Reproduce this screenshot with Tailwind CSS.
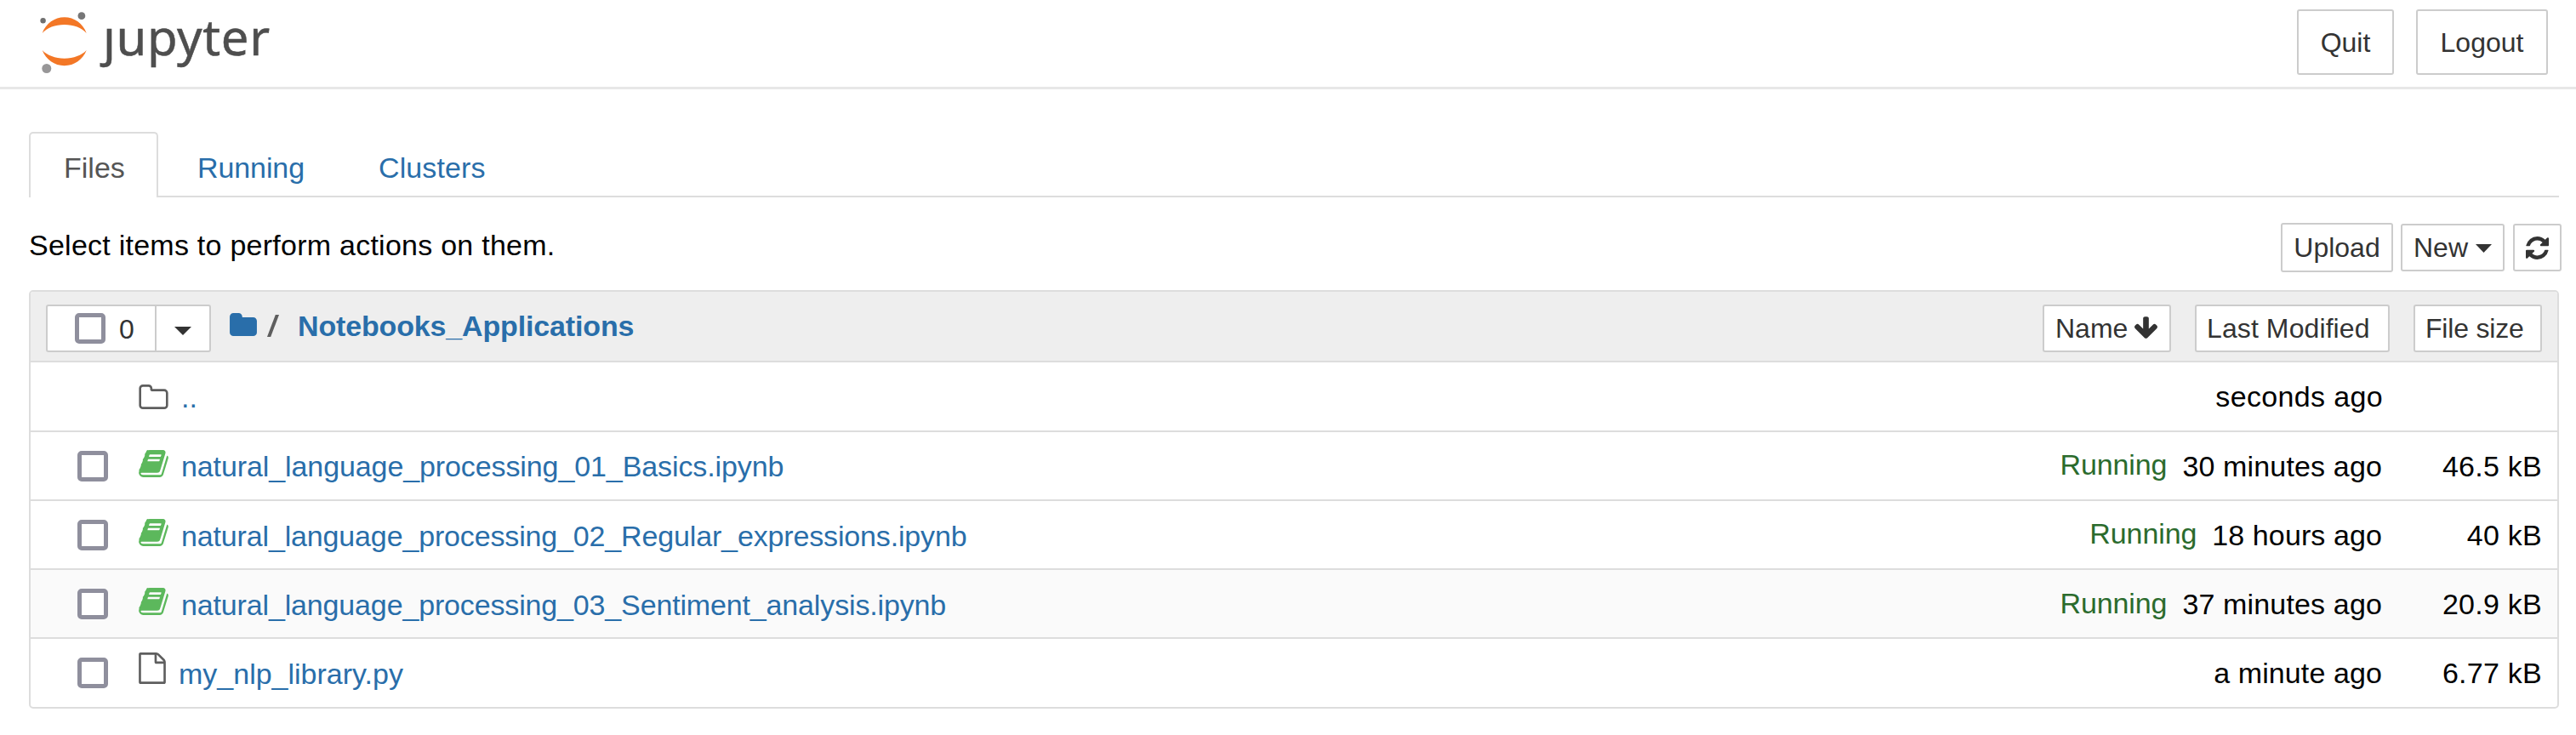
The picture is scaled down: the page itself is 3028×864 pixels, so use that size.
<!DOCTYPE html>
<html lang="en">
<head>
<meta charset="utf-8">
<title>Jupyter</title>
<script src="https://cdn.jsdelivr.net/npm/@tailwindcss/browser@4"></script>
</head>
<body class="bg-white text-black font-['Liberation_Sans',Arial,sans-serif] text-[34px] leading-[40px] w-[3028px] h-[864px] overflow-hidden whitespace-nowrap">
<svg class="hidden">
  <symbol id="book" viewBox="64 128 1664 1536"><path d="M1703 478q40 57 18 129l-275 906q-19 64-76.500 107.500t-122.500 43.500h-923q-77 0-148.500-53.500t-99.500-131.500q-24-67-2-127 0-4 3-27t4-37q1-8-3-21.500t-3-19.500q2-11 8-21t16.500-23.500 16.500-23.500q23-38 45-91.500t30-91.500q3-10 .5-30t-.5-28q3-11 17-28t17-23q21-36 42-92t25-90q1-9-2.500-32t.5-28q4-13 22-30.500t22-22.500q19-26 42.500-84.500t27.500-96.500q1-8-3-25.500t-2-26.500q2-8 9-18t18-23 17-21q8-12 16.500-30.500t15-35 16-36 19.500-32 26.500-23.500 36-11.500 47.500 5.500l-1 3q38-9 51-9h761q74 0 114 56t18 130l-274 906q-36 119-71.500 153.500t-128.500 34.500h-869q-27 0-38 15-11 16-1 43 24 70 144 70h923q29 0 56-15.500t35-41.500l300-987q7-22 5-57 38 15 59 43zm-1064 2q-4 13 2 22.500t20 9.500h608q13 0 25.500-9.500t16.500-22.500l21-64q4-13-2-22.500t-20-9.500h-608q-13 0-25.500 9.500t-16.500 22.500zm-83 256q-4 13 2 22.500t20 9.500h608q13 0 25.500-9.500t16.500-22.500l21-64q4-13-2-22.500t-20-9.500h-608q-13 0-25.500 9.500t-16.500 22.500z"/></symbol>
</svg>

<header class="h-[105px] border-b-[3px] border-[#e7e7e7] flex justify-between pr-[33px]">
  <div class="flex">
    <svg class="ml-[44px] mt-[10px] w-[64px] h-[80px] shrink-0" viewBox="44 10 64 80">
      <path fill="#f37726" d="M49.700 39C54 27.500 64 20.300 75.700 20.300S97.400 27.500 101.700 39C96 32.500 86.500 29 75.700 29S55.400 32.500 49.700 39zM49.700 59C55.400 65 64.900 68.700 75.700 68.700S96 65 101.700 59C97.400 70 87.400 77.200 75.700 77.200S54 70 49.700 59z"/>
      <circle cx="50.600" cy="24.200" r="3.200" fill="#6f6f6f"/><circle cx="95.900" cy="18.700" r="4.400" fill="#767677"/><circle cx="54.800" cy="80.500" r="5.500" fill="#989798"/>
    </svg>
    <div class="ml-[13px] mt-[3px] font-['Noto_Sans',sans-serif] text-[58px] leading-[80px] tracking-[0.6px] text-[#4e4e4e] [-webkit-text-stroke:0.5px_#4e4e4e]">ȷupyter</div>
  </div>
  <div class="flex gap-[26px] pt-[11px] text-[32px] text-[#333]">
    <button class="w-[114px] h-[77px] border-2 border-[#ccc] rounded-[3px]">Quit</button>
    <button class="w-[155px] h-[77px] border-2 border-[#ccc] rounded-[3px]">Logout</button>
  </div>
</header>

<main class="pl-[34px] pr-[20px] pt-[50px]">
  <nav class="flex h-[77px] text-[#296eaa] shadow-[inset_0_-2px_0_#ddd]">
    <div class="w-[152px] h-[77px] bg-white border-2 border-b-0 border-[#ddd] rounded-t-[5px] text-[#555] pl-[39px] pt-[20px]">Files</div>
    <div class="ml-[46px] pt-[22px] w-[213px] tracking-[-0.1px]">Running</div>
    <div class="pt-[22px] tracking-[0.1px]">Clusters</div>
  </nav>

  <div class="flex justify-between h-[109px] pt-[30px] mr-[-3px]">
    <div class="pt-[6px] tracking-[0.25px]">Select items to perform actions on them.</div>
    <div class="flex items-start text-[32px] text-[#333]">
      <button class="w-[132px] h-[58px] border-2 border-[#ccc] rounded-[3px] flex items-center justify-center">Upload</button>
      <button class="ml-[9px] mt-px w-[122px] h-[56px] border-2 border-[#ccc] rounded-[3px] flex items-center pl-[13px]">New<svg class="ml-[9px] mt-px w-[19px] h-[10px]" viewBox="0 0 19 10"><path fill="#333" d="M0 0h19L9.500 10z"/></svg></button>
      <button class="ml-[10px] mt-px w-[57px] h-[56px] border-2 border-[#ccc] rounded-[3px] flex items-center justify-center"><svg class="w-[27px] h-[27px]" viewBox="128 128 1536 1536"><path fill="#333" d="M1639 1056q0 5-1 7-64 268-268 434.500t-478 166.500q-146 0-282.500-55t-243.500-157l-129 129q-19 19-45 19t-45-19-19-45v-448q0-26 19-45t45-19h448q26 0 45 19t19 45-19 45l-137 137q71 66 161 102t187 36q134 0 250-65t186-179q11-17 53-117 8-23 30-23h192q13 0 22.500 9.500t9.500 22.500zm25-800v448q0 26-19 45t-45 19h-448q-26 0-45-19t-19-45 19-45l138-138q-148-137-349-137-134 0-250 65t-186 179q-11 17-53 117-8 23-30 23h-199q-13 0-22.500-9.500t-9.500-22.500v-7q65-268 270-434.500t480-166.500q146 0 284 55.500t245 156.500l130-129q19-19 45-19t45 19 19 45z"/></svg></button>
    </div>
  </div>

  <section class="border-2 border-[#ddd] rounded-[5px] h-[492px] overflow-hidden">
    <div class="h-[83px] bg-[#eee] border-b-2 border-[#ddd] flex items-start pl-[18px] pr-[18px] pt-[15px]">
      <div class="flex w-[194px] h-[56px] bg-white border-2 border-[#ccc] rounded-[3px] text-[32px] text-[#333]">
        <div class="w-[128px] border-r-2 border-[#ccc] flex items-center pl-[32px]"><span class="size-[36px] border-[5px] border-[#8f8f9d] rounded-[5px]"></span><span class="ml-[16px] mt-px">0</span></div>
        <div class="flex-1 flex items-center justify-center"><svg class="mt-[5px] w-[20px] h-[10px]" viewBox="0 0 20 10"><path fill="#333" d="M0 0h20L10 10z"/></svg></div>
      </div>
      <svg class="ml-[22px] mt-[10px] w-[32px] h-[27px]" viewBox="64 128 1664 1408"><path fill="#296eaa" d="M1728 608v704q0 92-66 158t-158 66h-1216q-92 0-158-66t-66-158v-960q0-92 66-158t158-66h320q92 0 158 66t66 158v32h672q92 0 158 66t66 158z"/></svg>
      <svg class="ml-[12px] mt-[12px] w-[14px] h-[26px]" viewBox="0 0 14 26"><path fill="#5e5e5e" d="M9.800 0H14L4.200 26H0z"/></svg>
      <div class="ml-[22px] mt-[5px] font-bold text-[#296eaa] tracking-[-0.15px]">Notebooks_Applications</div>
      <div class="ml-auto flex gap-[28px] text-[32px] text-[#333]">
        <button class="w-[151px] h-[56px] bg-white border-2 border-[#ccc] rounded-[3px] flex items-center pl-[13px]">Name<svg class="ml-[8px] mt-[-3px] w-[27px] h-[26px]" viewBox="117 128 1558 1483"><path fill="#333" d="M1675 832q0 53-37 90l-651 652q-39 37-91 37-53 0-90-37l-651-652q-38-36-38-90 0-53 38-91l74-75q39-37 91-37 53 0 90 37l294 294v-704q0-52 38-90t90-38h128q52 0 90 38t38 90v704l294-294q37-37 90-37 52 0 91 37l75 75q37 39 37 91z"/></svg></button>
        <button class="w-[229px] h-[56px] bg-white border-2 border-[#ccc] rounded-[3px] text-left pl-[12px] tracking-[0.1px]">Last Modified</button>
        <button class="w-[151px] h-[56px] bg-white border-2 border-[#ccc] rounded-[3px] text-left pl-[12px] tracking-[-0.2px]">File size</button>
      </div>
    </div>

    <div class="h-[82px] border-b-2 border-[#ddd] flex items-center pr-[18px]">
      <svg class="ml-[127px] w-[35px] h-[29px]" viewBox="64 128 1664 1408"><path fill="#5e5e5e" d="M1600 1312v-704q0-40-28-68t-68-28h-704q-40 0-68-28t-28-68v-64q0-40-28-68t-68-28h-320q-40 0-68 28t-28 68v960q0 40 28 68t68 28h1216q40 0 68-28t28-68zm128-704v704q0 92-66 158t-158 66h-1216q-92 0-158-66t-66-158v-960q0-92 66-158t158-66h320q92 0 158 66t66 158v32h672q92 0 158 66t66 158z"/></svg>
      <span class="ml-[15px] mt-[2px] text-[#296eaa]">..</span>
      <span class="ml-auto mr-[187px] tracking-[0.35px]">seconds ago</span>
    </div>

    <div class="h-[81px] border-b-2 border-[#ddd] flex items-center pr-[18px]">
      <span class="ml-[55px] size-[36px] bg-white border-[5px] border-[#8f8f9d] rounded-[5px]"></span>
      <svg class="ml-[36px] mt-[-5px] w-[35px] h-[32px]" fill="#5cb85c"><use href="#book"/></svg>
      <span class="ml-[15px] mt-px text-[#296eaa] tracking-[-0.1px]">natural_language_processing_01_Basics.ipynb</span>
      <span class="ml-auto mr-[18px] mt-[-3px] text-[#2b6b2d] tracking-[-0.1px]">Running</span>
      <span class="tracking-[0.15px]">30 minutes ago</span>
      <span class="w-[188px] text-right tracking-[0.25px]">46.5 kB</span>
    </div>
    <div class="h-[81px] border-b-2 border-[#ddd] flex items-center pr-[18px]">
      <span class="ml-[55px] size-[36px] bg-white border-[5px] border-[#8f8f9d] rounded-[5px]"></span>
      <svg class="ml-[36px] mt-[-5px] w-[35px] h-[32px]" fill="#5cb85c"><use href="#book"/></svg>
      <span class="ml-[15px] mt-[2px] text-[#296eaa] tracking-[-0.15px]">natural_language_processing_02_Regular_expressions.ipynb</span>
      <span class="ml-auto mr-[18px] mt-[-3px] text-[#2b6b2d] tracking-[-0.1px]">Running</span>
      <span class="mt-px tracking-[0.1px]">18 hours ago</span>
      <span class="mt-px w-[188px] text-right tracking-[0.25px]">40 kB</span>
    </div>
    <div class="h-[81px] border-b-2 border-[#ddd] bg-[#fafafa] flex items-center pr-[18px]">
      <span class="ml-[55px] size-[36px] bg-white border-[5px] border-[#8f8f9d] rounded-[5px]"></span>
      <svg class="ml-[36px] mt-[-5px] w-[35px] h-[32px]" fill="#5cb85c"><use href="#book"/></svg>
      <span class="ml-[15px] mt-[2px] text-[#296eaa] tracking-[-0.15px]">natural_language_processing_03_Sentiment_analysis.ipynb</span>
      <span class="ml-auto mr-[18px] mt-[-2px] text-[#2b6b2d] tracking-[-0.1px]">Running</span>
      <span class="tracking-[0.15px]">37 minutes ago</span>
      <span class="w-[188px] text-right tracking-[0.25px]">20.9 kB</span>
    </div>
    <div class="h-[80px] flex items-center pr-[18px]">
      <span class="ml-[55px] size-[36px] bg-white border-[5px] border-[#8f8f9d] rounded-[5px]"></span>
      <svg class="ml-[36px] mt-[-11px] w-[32px] h-[37px]" viewBox="128 0 1536 1792"><path fill="#5e5e5e" d="M1596 380q28 28 48 76t20 88v1152q0 40-28 68t-68 28h-1344q-40 0-68-28t-28-68v-1600q0-40 28-68t68-28h896q40 0 88 20t76 48zm-444-244v376h376q-10-29-22-41l-313-313q-12-12-41-22zm384 1528v-1024h-416q-40 0-68-28t-28-68v-416h-768v1536h1280z"/></svg>
      <span class="ml-[15px] mt-[2px] text-[#296eaa]">my_nlp_library.py</span>
      <span class="ml-auto tracking-[0.1px]">a minute ago</span>
      <span class="w-[188px] text-right tracking-[0.25px]">6.77 kB</span>
    </div>
  </section>
</main>
</body>
</html>
